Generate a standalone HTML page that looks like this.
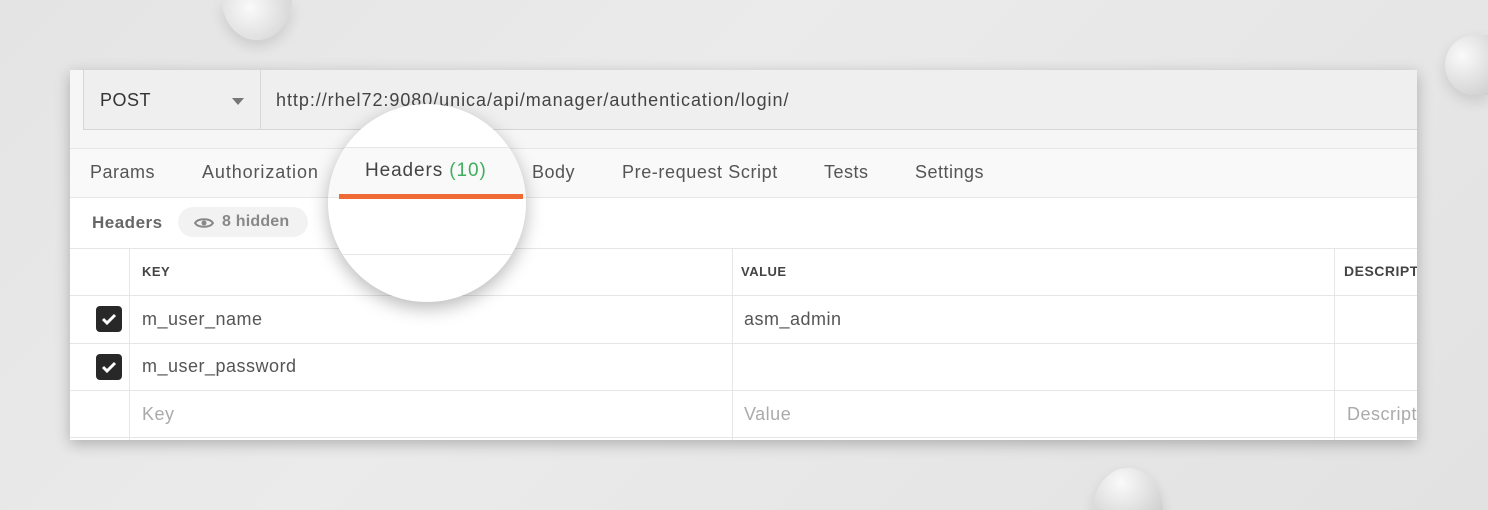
<!DOCTYPE html>
<html><head><style>
*{margin:0;padding:0;box-sizing:border-box}
html,body{width:1488px;height:510px;overflow:hidden}
body{font-family:"Liberation Sans",sans-serif}
#w{position:relative;width:1488px;height:510px;overflow:hidden;background:linear-gradient(135deg,#e4e4e4 0%,#ebebeb 40%,#e2e2e2 100%)}
.a{position:absolute}
.t{position:absolute;font-size:18px;color:#555;white-space:nowrap;letter-spacing:.5px}
.ball{position:absolute;background:radial-gradient(circle at 40% 35%,#fafafa,#e0e0e0 60%,#cfcfcf);box-shadow:0 6px 14px rgba(0,0,0,.12)}
.hl{position:absolute;height:1px;background:#e6e6e6}
.vl{position:absolute;width:1px;background:#e6e6e6}
.cb{position:absolute;width:26px;height:26px;background:#282828;border-radius:4px}
</style></head><body><div id="w">
<div class="ball" style="left:222px;top:0;width:70px;height:40px;border-radius:0 0 35px 35px/0 0 40px 40px;background:radial-gradient(circle at 40% 20%,#fafafa,#e0e0e0 60%,#cfcfcf)"></div>
<div class="ball" style="left:1445px;top:35px;width:43px;height:60px;border-radius:30px 0 0 30px"></div>
<div class="ball" style="left:1093px;top:468px;width:70px;height:42px;border-radius:35px 35px 0 0/42px 42px 0 0"></div>

<div class="a" style="left:70px;top:70px;width:1347px;height:370px;background:#fff;box-shadow:0 4px 14px rgba(0,0,0,.25);overflow:hidden">
 <div class="a" style="left:0;top:0;width:1347px;height:78px;background:#f6f6f6"></div>
 <div class="a" style="left:13px;top:0;width:1334px;height:60px;background:#efefef;border:1px solid #d6d6d6;border-top:none;border-right:none"></div>
 <div class="vl" style="left:190px;top:0;height:60px;background:#d8d8d8"></div>
 <div class="t" style="left:30px;top:20px;color:#333">POST</div>
 <div class="a" style="left:162px;top:28px;width:0;height:0;border-left:6px solid transparent;border-right:6px solid transparent;border-top:7px solid #777"></div>
 <div class="t" style="left:206px;top:20px;color:#444;letter-spacing:.95px">http://rhel72:9080/unica/api/manager/authentication/login/</div>
 <div class="a" style="left:0;top:78px;width:1347px;height:50px;background:#f9f9f9;border-top:1px solid #e6e6e6;border-bottom:1px solid #e6e6e6"></div>
 <div class="t" style="left:20px;top:92px">Params</div>
 <div class="t" style="left:132px;top:92px;letter-spacing:.9px">Authorization</div>
 <div class="t" style="left:462px;top:92px">Body</div>
 <div class="t" style="left:552px;top:92px;letter-spacing:.6px">Pre-request Script</div>
 <div class="t" style="left:754px;top:92px">Tests</div>
 <div class="t" style="left:845px;top:92px">Settings</div>
 <div class="t" style="left:22px;top:143px;font-weight:bold;color:#666;font-size:17px">Headers</div>
 <div class="a" style="left:108px;top:137px;width:130px;height:30px;border-radius:15px;background:#f2f2f2"></div>
 <svg class="a" style="left:124px;top:146px" width="20" height="14" viewBox="0 0 20 14"><path d="M1 7C4 2 16 2 19 7C16 12 4 12 1 7Z" fill="none" stroke="#888" stroke-width="2"/><circle cx="10" cy="7" r="2.5" fill="#888"/></svg>
 <div class="t" style="left:152px;top:143px;color:#888;font-size:16px;font-weight:bold;letter-spacing:.2px">8 hidden</div>
 <div class="hl" style="left:0;top:178px;width:1347px"></div>
 <div class="hl" style="left:0;top:225px;width:1347px"></div>
 <div class="hl" style="left:0;top:273px;width:1347px"></div>
 <div class="hl" style="left:0;top:320px;width:1347px"></div>
 <div class="hl" style="left:0;top:367px;width:1347px"></div>
 <div class="vl" style="left:59px;top:178px;height:192px"></div>
 <div class="vl" style="left:662px;top:178px;height:192px"></div>
 <div class="vl" style="left:1264px;top:178px;height:192px"></div>
 <div class="t" style="left:72px;top:194px;font-size:13px;font-weight:bold;color:#444">KEY</div>
 <div class="t" style="left:671px;top:194px;font-size:13px;font-weight:bold;color:#444">VALUE</div>
 <div class="t" style="left:1274px;top:193px;font-size:14px;font-weight:bold;color:#444">DESCRIPT</div>
 <div class="cb" style="left:26px;top:236px"></div>
 <div class="cb" style="left:26px;top:284px"></div>
 <svg class="a" style="left:26px;top:236px" width="26" height="26"><path d="M7 13l4 4 8-8" fill="none" stroke="#fff" stroke-width="3"/></svg>
 <svg class="a" style="left:26px;top:284px" width="26" height="26"><path d="M7 13l4 4 8-8" fill="none" stroke="#fff" stroke-width="3"/></svg>
 <div class="t" style="left:72px;top:239px">m_user_name</div>
 <div class="t" style="left:674px;top:239px">asm_admin</div>
 <div class="t" style="left:72px;top:286px">m_user_password</div>
 <div class="t" style="left:72px;top:334px;color:#aaa">Key</div>
 <div class="t" style="left:674px;top:334px;color:#aaa">Value</div>
 <div class="t" style="left:1277px;top:334px;color:#aaa">Descript</div>
</div>

<div class="a" style="left:328px;top:104px;width:198px;height:198px;border-radius:50%;background:#fff;box-shadow:0 6px 18px rgba(0,0,0,.28);overflow:hidden">
 <div class="a" style="left:0;top:43px;width:198px;height:51px;background:#f9f9f9;border-top:1px solid #e6e6e6;border-bottom:1px solid #e6e6e6"></div>
 <div class="hl" style="left:0;top:150px;width:198px"></div>
 <div class="t" style="left:37px;top:56px;font-size:19px;color:#444;letter-spacing:.9px">Headers <span style="color:#3fae5d">(10)</span></div>
 <div class="a" style="left:11px;top:90px;width:184px;height:5px;background:#f06a35"></div>
</div>
</div></body></html>
